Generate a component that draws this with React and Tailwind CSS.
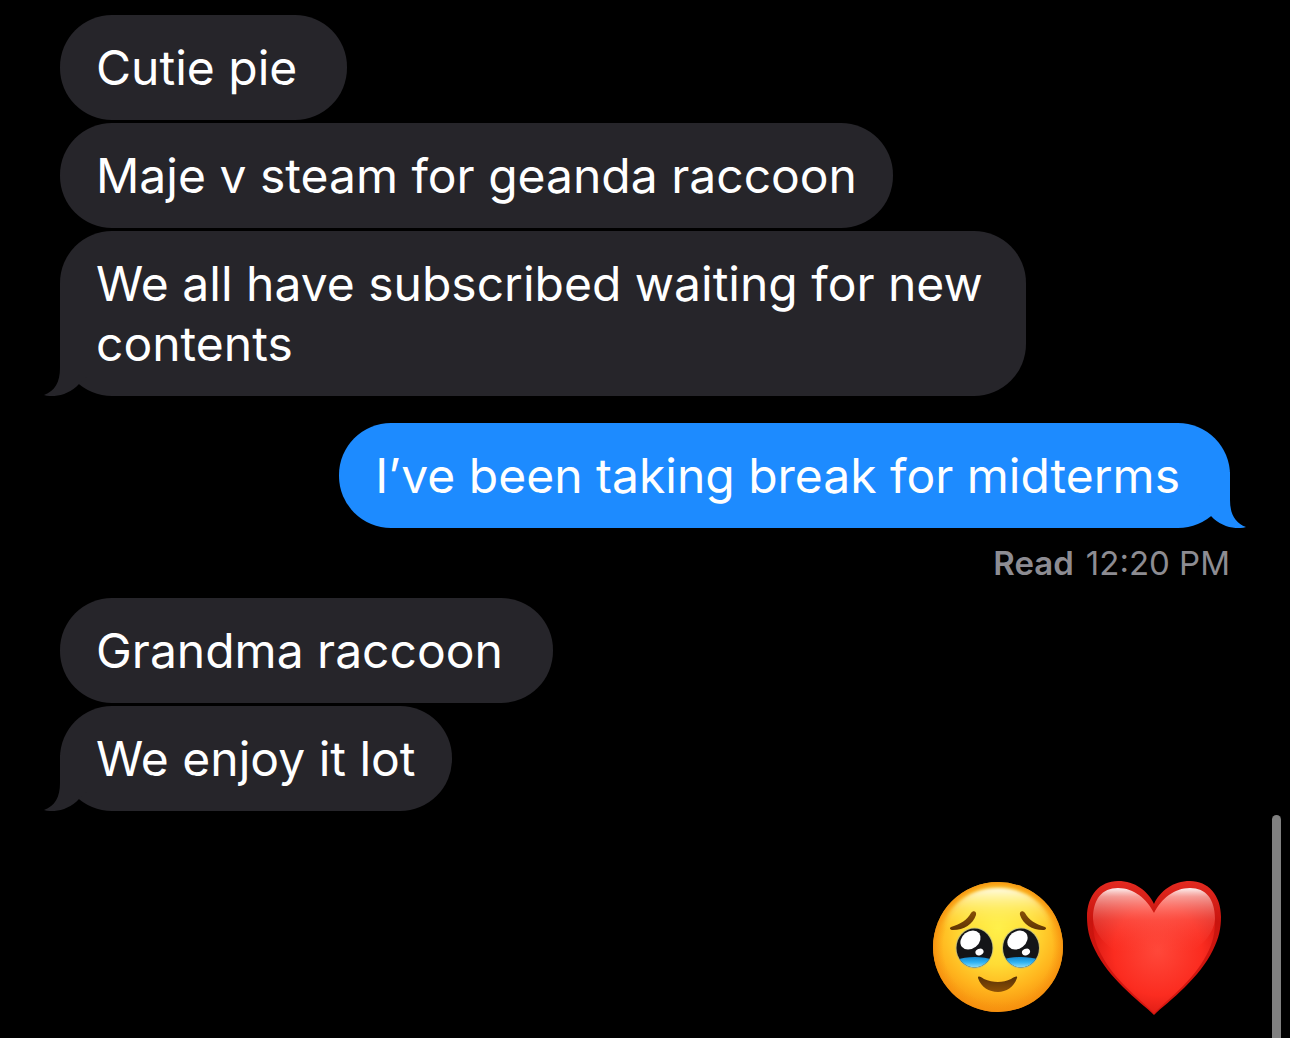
import React from 'react';
import { clsx } from 'clsx';

const thread = [
  {
    id: 1,
    from: 'them',
    messages: [
      { text: 'Cutie pie', pad: 'pr-[50px]' },
      { text: 'Maje v steam for geanda raccoon', pad: 'pr-9' },
      { text: 'We all have subscribed waiting for new contents', pad: 'pr-9' },
    ],
  },
  {
    id: 2,
    from: 'me',
    messages: [{ text: 'I’ve been taking break for midterms', pad: 'pr-[50px]' }],
    read: '12:20 PM',
  },
  {
    id: 3,
    from: 'them',
    messages: [
      { text: 'Grandma raccoon', pad: 'pr-[50px]' },
      { text: 'We enjoy it lot', pad: 'pr-9' },
    ],
  },
];

const Tail = ({ mine }) => (
  <svg
    viewBox="0 0 50 56"
    aria-hidden="true"
    className={clsx(
      'absolute bottom-0 h-[56px] w-[50px]',
      mine ? '-right-4 -scale-x-100 fill-[#1d8bff]' : '-left-4 fill-[#26252a]'
    )}
  >
    <path d="M16 0V28C16 42 11 51 0 55C10 58 25 55 35 44L50 30V0Z" />
  </svg>
);

const Bubble = ({ message, mine, last }) => (
  <li
    className={clsx(
      'relative max-w-[966px] rounded-[52px] pt-[23px] pb-[22px] pl-9 text-5xl leading-[60px] text-white',
      message.pad,
      mine ? 'bg-[#1d8bff]' : 'bg-[#26252a]'
    )}
  >
    {last && <Tail mine={mine} />}
    <p className="relative">{message.text}</p>
  </li>
);

const TearyFace = () => (
  <svg viewBox="0 0 155 155" className="h-[155px] w-[155px]" role="img" aria-label="Face holding back tears">
    <defs>
      <radialGradient id="face" cx="0.5" cy="0.36" r="0.68">
        <stop offset="0" stopColor="#fff04a" />
        <stop offset="0.4" stopColor="#ffdc35" />
        <stop offset="0.7" stopColor="#ffb41d" />
        <stop offset="1" stopColor="#f5860a" />
      </radialGradient>
      <radialGradient id="faceRim" cx="0.5" cy="0.5" r="0.5">
        <stop offset="0.84" stopColor="#f99a12" stopOpacity="0" />
        <stop offset="1" stopColor="#f58f0e" stopOpacity="0.85" />
      </radialGradient>
      <linearGradient id="faceShine" x1="0" y1="0" x2="0" y2="1">
        <stop offset="0" stopColor="#fffef0" stopOpacity="0.95" />
        <stop offset="0.4" stopColor="#fffa9c" stopOpacity="0.4" />
        <stop offset="0.8" stopColor="#fff153" stopOpacity="0" />
      </linearGradient>
      <filter id="soften" x="-0.1" y="-0.1" width="1.2" height="1.2">
        <feGaussianBlur stdDeviation="1.5" />
      </filter>
      <linearGradient id="tear" x1="0" y1="0" x2="0" y2="1">
        <stop offset="0" stopColor="#1689cf" />
        <stop offset="0.4" stopColor="#2fb2f3" />
        <stop offset="0.8" stopColor="#8cdcf5" />
      </linearGradient>
      <linearGradient id="brow" x1="0" y1="0" x2="0" y2="1">
        <stop offset="0" stopColor="#875006" />
        <stop offset="1" stopColor="#5f3505" />
      </linearGradient>
      <linearGradient id="smile" x1="0" y1="0" x2="0" y2="1">
        <stop offset="0" stopColor="#573006" />
        <stop offset="1" stopColor="#8d5006" />
      </linearGradient>
      <clipPath id="leftEye">
        <ellipse cx="54.5" cy="78" rx="18" ry="19.5" />
      </clipPath>
      <clipPath id="rightEye">
        <ellipse cx="101" cy="78" rx="18" ry="19.5" />
      </clipPath>
    </defs>
    <circle cx="78" cy="77" r="65" fill="url(#face)" />
    <circle cx="78" cy="77" r="65" fill="url(#faceRim)" />
    <path
      d="M78 18C50 18 27 35 21 62C38 72 118 72 135 62C129 35 106 18 78 18Z"
      fill="url(#faceShine)"
      filter="url(#soften)"
    />
    <path d="M31 57C41 54 47 50 51 43C53 40 57 41 56 45C53 54 44 60 33 60C30 60 29 58 31 57Z" fill="url(#brow)" />
    <path d="M125 57C115 54 109 50 105 43C103 40 99 41 100 45C103 54 112 60 123 60C126 60 127 58 125 57Z" fill="url(#brow)" />
    <ellipse cx="54.5" cy="78" rx="19" ry="20.5" fill="#a6b29b" opacity="0.6" />
    <ellipse cx="101" cy="78" rx="19" ry="20.5" fill="#a6b29b" opacity="0.6" />
    <g clipPath="url(#leftEye)">
      <rect x="36" y="58" width="38" height="40" fill="#141518" />
      <path d="M36 90C46 86 64 86 73 90V100H36Z" fill="url(#tear)" />
    </g>
    <g clipPath="url(#rightEye)">
      <rect x="82" y="58" width="38" height="40" fill="#141518" />
      <path d="M82 90C92 86 110 86 120 90V100H82Z" fill="url(#tear)" />
    </g>
    <ellipse cx="50.5" cy="70" rx="11" ry="8.5" transform="rotate(-38 50.5 70)" fill="#fff" />
    <ellipse cx="97.5" cy="70" rx="11" ry="8.5" transform="rotate(-38 97.5 70)" fill="#fff" />
    <ellipse cx="59.5" cy="82" rx="4.2" ry="3.2" transform="rotate(-25 59.5 82)" fill="#fff" />
    <ellipse cx="106" cy="82" rx="4.2" ry="3.2" transform="rotate(-25 106 82)" fill="#fff" />
    <path d="M58 108C58 105 61 107 64 109C73 113 83 113 91 109C94 107 98 105 97 108C94 117 86 122 78 122C69 122 61 117 58 108Z" fill="url(#smile)" />
  </svg>
);

const Heart = () => (
  <svg viewBox="0 0 160 155" className="h-[155px] w-[160px]" role="img" aria-label="Red heart">
    <defs>
      <linearGradient id="heartEdge" x1="0" y1="0" x2="0" y2="1">
        <stop offset="0" stopColor="#e32a20" />
        <stop offset="0.3" stopColor="#c9140e" />
        <stop offset="1" stopColor="#d91710" />
      </linearGradient>
      <radialGradient id="heartBody" cx="0.53" cy="0.5" r="0.6">
        <stop offset="0" stopColor="#ff483a" />
        <stop offset="0.6" stopColor="#fb2c20" />
        <stop offset="1" stopColor="#d01510" />
      </radialGradient>
      <linearGradient id="heartShine" x1="0" y1="0" x2="0" y2="1">
        <stop offset="0" stopColor="#fff" stopOpacity="0.95" />
        <stop offset="0.12" stopColor="#ffd2cc" stopOpacity="0.7" />
        <stop offset="0.45" stopColor="#ff7a6e" stopOpacity="0.35" />
        <stop offset="0.9" stopColor="#ff4034" stopOpacity="0" />
      </linearGradient>
    </defs>
    <path
      d="M79 145C72 138 60 129 48 117C37 106 27 94 20 80C14 68 12 58 12 47C12 25 25 11 43 11C60 11 73 21 79 34C85 21 98 11 115 11C133 11 146 25 146 47C146 58 144 68 138 80C131 94 121 106 110 117C98 129 86 138 79 145Z"
      fill="url(#heartEdge)"
    />
    <path
      d="M79 143C72 136 61 127 50 116C39 105 30 93 24 80C19 69 18 60 18 49C18 29 27 18 43 18C59 18 72 29 79 43C86 29 99 18 115 18C131 18 140 29 140 49C140 60 139 69 134 80C128 93 119 105 108 116C97 127 86 136 79 143Z"
      fill="url(#heartBody)"
    />
    <path
      d="M18 49C18 29 27 18 43 18C59 18 72 29 79 43C86 29 99 18 115 18C131 18 140 29 140 49C139 63 128 76 112 84C92 92 66 92 46 84C30 76 19 63 18 49Z"
      fill="url(#heartShine)"
    />
  </svg>
);

const MessageGroup = ({ group }) => {
  const mine = group.from === 'me';

  return (
    <section className={clsx('flex flex-col', mine ? 'items-end' : 'items-start')}>
      <ul className={clsx('flex flex-col gap-[3px]', mine ? 'items-end' : 'items-start')}>
        {group.messages.map((message, i) => (
          <Bubble key={message.text} message={message} mine={mine} last={i === group.messages.length - 1} />
        ))}
      </ul>
      {group.read && (
        <p className="mt-[15px] flex gap-3 text-[33px] leading-[40px] text-[#8d8c92]">
          <span className="font-semibold">Read</span>
          <time>{group.read}</time>
        </p>
      )}
    </section>
  );
};

const App = () => {
  return (
    <div className="flex min-h-screen overflow-hidden bg-black font-['Inter',sans-serif]">
      <main className="flex-1 pt-[15px] pl-[60px]">
        <div className="flex flex-col pr-[42px]">
          {thread.map((group) => (
            <div key={group.id} className={group.from === 'me' ? 'pt-[27px] pb-[15px]' : ''}>
              <MessageGroup group={group} />
            </div>
          ))}
        </div>
        <div className="mt-[59px] flex justify-end pr-[37px]">
          <TearyFace />
          <Heart />
        </div>
      </main>
      {/* Scroll indicator */}
      <div className="mr-[9px] flex w-[9px] flex-col pt-[815px]">
        <div className="flex-1 rounded-t-full bg-[#808080]" />
      </div>
    </div>
  );
};

export default App;
